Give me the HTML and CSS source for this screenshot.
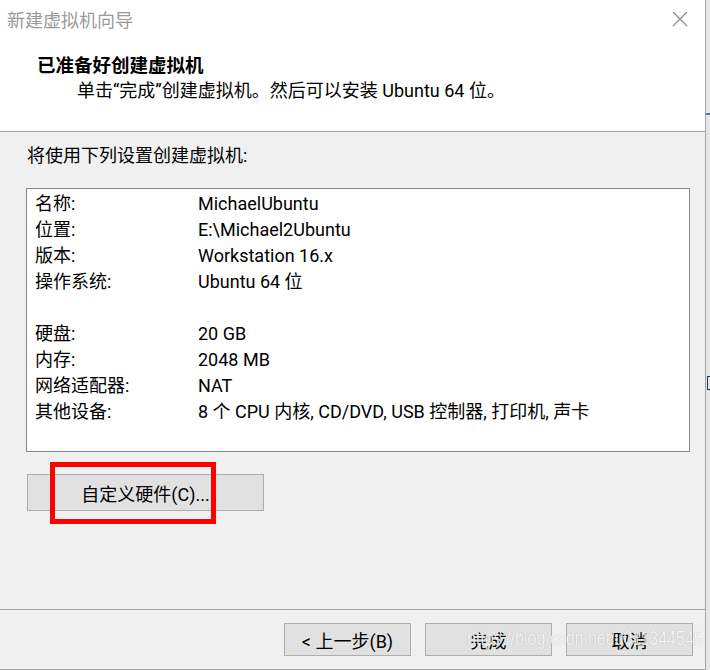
FILE: index.html
```html
<!DOCTYPE html>
<html lang="zh-CN">
<head>
<meta charset="utf-8">
<title>新建虚拟机向导</title>
<link rel="stylesheet" href="styles.css">
</head>
<body>
<div class="screen">
  <div class="dialog">
    <div class="header">
      <div class="titlebar">
        <span class="title">新建虚拟机向导</span>
        <svg class="close" width="16" height="16" viewBox="0 0 16 16"><path d="M1 1L15 15M15 1L1 15" stroke="#8c8c8c" stroke-width="1.2" fill="none"/></svg>
      </div>
      <div class="head-title">已准备好创建虚拟机</div>
      <div class="head-sub">单击“完成”创建虚拟机。然后可以安装 Ubuntu 64 位。</div>
    </div>
    <div class="body">
      <div class="intro">将使用下列设置创建虚拟机:</div>
      <div class="listbox">
        <div class="row"><span class="lbl">名称:</span><span class="val">MichaelUbuntu</span></div>
        <div class="row"><span class="lbl">位置:</span><span class="val">E:\Michael2Ubuntu</span></div>
        <div class="row"><span class="lbl">版本:</span><span class="val">Workstation 16.x</span></div>
        <div class="row"><span class="lbl">操作系统:</span><span class="val">Ubuntu 64 位</span></div>
        <div class="row"></div>
        <div class="row"><span class="lbl">硬盘:</span><span class="val">20 GB</span></div>
        <div class="row"><span class="lbl">内存:</span><span class="val">2048 MB</span></div>
        <div class="row"><span class="lbl">网络适配器:</span><span class="val">NAT</span></div>
        <div class="row"><span class="lbl">其他设备:</span><span class="val">8 个 CPU 内核, CD/DVD, USB 控制器, 打印机, 声卡</span></div>
      </div>
      <div class="custom-wrap">
        <button class="btn custom">自定义硬件(C)...</button>
        <div class="highlight"></div>
      </div>
    </div>
    <div class="footer">
      <button class="btn nav">&lt; 上一步(B)</button>
      <button class="btn nav">完成</button>
      <button class="btn nav">取消</button>
      <div class="watermark">https://blog.csdn.net/u011344545</div>
    </div>
  </div>
  <div class="strip"><div class="strip-accent"></div><div class="strip-e"></div></div>
</div>
</body>
</html>
```
FILE: styles.css
```css
* { box-sizing: border-box; }
html, body { margin: 0; padding: 0; }
body {
  width: 710px;
  height: 670px;
  overflow: hidden;
  font-family: Roboto, "Noto Sans CJK SC", sans-serif;
  font-size: 18px;
  color: #000;
  background: #f0f0f0;
}
.screen { display: flex; width: 710px; height: 670px; }
.dialog {
  width: 706px;
  height: 670px;
  display: flex;
  flex-direction: column;
  border-right: 1px solid #a6a6a6;
  border-bottom: 1px solid #a6a6a6;
  background: #f0f0f0;
}
.header {
  background: #fff;
  height: 132px;
  border-bottom: 1px solid #a0a0a0;
  flex: none;
}
.titlebar {
  height: 40px;
  display: flex;
  align-items: center;
  justify-content: space-between;
  padding: 0 17px 2px 7px;
}
.title { color: #999; font-size: 18px; }
.close { display: block; }
.head-title {
  padding-left: 37px;
  margin-top: 11px;
  font-family: "Noto Sans CJK SC", sans-serif;
  font-weight: bold;
  font-size: 18.5px;
  line-height: 26px;
}
.head-sub {
  padding-left: 77px;
  margin-top: 1px;
  line-height: 26px;
}
.body {
  flex: 1;
  border-bottom: 1px solid #a0a0a0;
  padding: 11px 0 0 26px;
}
.intro { padding-left: 1px; line-height: 26px; }
.listbox {
  margin-top: 19px;
  width: 664px;
  height: 264px;
  background: #fff;
  border: 1px solid #828790;
  padding: 2px 0 0 8px;
}
.row { height: 26px; line-height: 26px; display: flex; white-space: nowrap; }
.lbl { width: 163px; flex: none; }
.custom-wrap { position: relative; margin-top: 22px; width: 237px; }
.btn {
  font: inherit;
  color: #000;
  background: #e1e1e1;
  border: 1px solid #adadad;
  padding: 0;
  border-radius: 0;
}
.custom { width: 237px; height: 37px; display: block; margin-left: 1px; }
.highlight {
  position: absolute;
  left: 24px;
  top: -12px;
  width: 166px;
  height: 62px;
  border: 5px solid #ff0000;
}
.footer {
  height: 59px;
  flex: none;
  position: relative;
  display: flex;
  justify-content: flex-end;
  align-items: flex-start;
  gap: 14px;
  padding: 13px 12px 0 0;
}
.nav { width: 127px; height: 33px; }
.watermark {
  position: absolute;
  left: 467px;
  top: 19px;
  font-family: "Liberation Sans", sans-serif;
  font-size: 16px;
  line-height: 20px;
  transform: scaleY(1.25);
  transform-origin: left center;
  color: rgba(255, 255, 255, 0.85);
  text-shadow: 0 0 1px rgba(0, 0, 0, 0.25);
  white-space: nowrap;
  pointer-events: none;
}
.strip { flex: 1; background: #e6e6e6; position: relative; overflow: hidden; }
.strip-accent { position: absolute; top: 113px; left: 0; width: 4px; height: 2px; background: #3c7fb1; }
.strip-e { position: absolute; top: 376px; left: 1px; width: 3px; height: 14px; border: 1px solid #1e3a5f; border-right: none; }
```
